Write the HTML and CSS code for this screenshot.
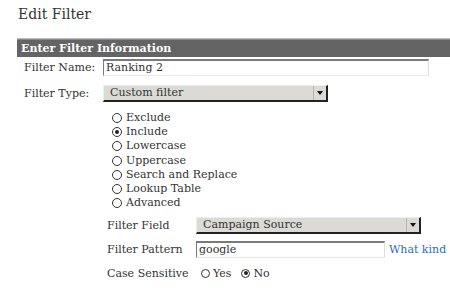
FILE: index.html
```html
<!DOCTYPE html>
<html>
<head>
<meta charset="utf-8">
<link rel="stylesheet" href="styles.css">
</head>
<body>
<h1 class="title">Edit Filter</h1>
<div class="panel">
  <div class="bar">Enter Filter Information</div>
  <div class="row">
    <span class="label">Filter Name:</span>
    <span class="input wide">Ranking 2</span>
  </div>
  <div class="row">
    <span class="label">Filter Type:</span>
    <span class="select type"><span class="sel-text">Custom filter</span><span class="arrow"></span></span>
  </div>
  <ul class="radios">
    <li><span class="radio"></span>Exclude</li>
    <li><span class="radio on"></span>Include</li>
    <li><span class="radio"></span>Lowercase</li>
    <li><span class="radio"></span>Uppercase</li>
    <li><span class="radio"></span>Search and Replace</li>
    <li><span class="radio"></span>Lookup Table</li>
    <li><span class="radio"></span>Advanced</li>
  </ul>
  <div class="sub">
    <span class="sublabel">Filter Field</span>
    <span class="select field"><span class="sel-text">Campaign Source</span><span class="arrow"></span></span>
    <span class="sublabel">Filter Pattern</span>
    <span class="patt"><span class="input pattern">google</span><a class="link">What kind of pattern?</a></span>
    <span class="sublabel">Case Sensitive</span>
    <span class="case"><span class="opt"><span class="radio sm"></span>Yes</span><span class="opt"><span class="radio sm on"></span>No</span></span>
  </div>
</div>
</body>
</html>
```
FILE: styles.css
```css
html, body {
  margin: 0;
  padding: 0;
  background: #fff;
  overflow: hidden;
}
body {
  font-family: "DejaVu Serif", serif;
  font-size: 11px;
  color: #333;
  width: 450px;
  height: 301px;
}
.title {
  font-size: 14px;
  font-weight: normal;
  margin: 0;
  padding: 6px 0 0 18px;
  height: 32px;
  box-sizing: border-box;
  color: #333;
}
.panel {
  margin-left: 17px;
  border-top: 1px solid #bbb;
  margin-top: 6px;
}
.bar {
  background: #646464;
  border-top: 1px solid #8a8a8a;
  color: #fff;
  font-weight: bold;
  height: 17px;
  line-height: 17px;
  padding-left: 4px;
  white-space: nowrap;
}
.row {
  display: flex;
  align-items: center;
  padding-left: 7px;
  height: 21px;
}
.row + .row { margin-top: 5px; }
.label {
  width: 79px;
  flex: none;
}
.input {
  display: block;
  box-sizing: border-box;
  height: 17px;
  line-height: 14px;
  padding-left: 2px;
  border-top: 2px solid #7a7a78;
  border-left: 1px solid #7a7a78;
  border-right: 1px solid #dedede;
  border-bottom: 1px solid #e8e8e8;
  background: #fff;
  white-space: nowrap;
  overflow: hidden;
}
.wide { width: 326px; }
.select {
  display: flex;
  align-items: center;
  box-sizing: border-box;
  height: 17px;
  background: #dcdad5;
  border-top: 1px solid #eee;
  border-left: 1px solid #eee;
  border-right: 2px solid #222;
  border-bottom: 2px solid #222;
  white-space: nowrap;
}
.sel-text {
  flex: 1;
  padding-left: 6px;
  line-height: 14px;
}
.arrow {
  width: 12px;
  height: 14px;
  border-left: 1px solid #b5b3ae;
  position: relative;
}
.arrow::after {
  content: "";
  position: absolute;
  left: 3px;
  top: 5px;
  border-left: 3px solid transparent;
  border-right: 3px solid transparent;
  border-top: 4px solid #111;
}
.type { width: 225px; }
.radios {
  list-style: none;
  margin: 7px 0 0 95px;
  padding: 0;
}
.radios li {
  height: 14.2px;
  line-height: 14px;
  display: flex;
  align-items: center;
  white-space: nowrap;
}
.radio {
  display: inline-block;
  box-sizing: border-box;
  width: 10px;
  height: 10px;
  border: 1px solid #333;
  border-radius: 50%;
  margin-right: 4px;
  position: relative;
  flex: none;
}
.radio.on::after {
  content: "";
  position: absolute;
  left: 2px;
  top: 2px;
  width: 4px;
  height: 4px;
  border-radius: 50%;
  background: #222;
}
.sub {
  display: grid;
  grid-template-columns: 89px auto;
  grid-auto-rows: 24px;
  align-items: center;
  margin-left: 90px;
  margin-top: 3px;
}
.sublabel { white-space: nowrap; }
.field { width: 225px; }
.patt {
  display: flex;
  align-items: center;
  white-space: nowrap;
}
.pattern { width: 189px; }
.link {
  color: #2a6ebb;
  margin-left: 4px;
}
.case {
  display: flex;
  align-items: center;
  gap: 10px;
  padding-left: 5px;
  white-space: nowrap;
}
.opt {
  display: flex;
  align-items: center;
}
.radio.sm {
  width: 9px;
  height: 9px;
  margin-right: 3px;
}
.radio.sm.on::after {
  left: 1.5px;
  top: 1.5px;
}
```
